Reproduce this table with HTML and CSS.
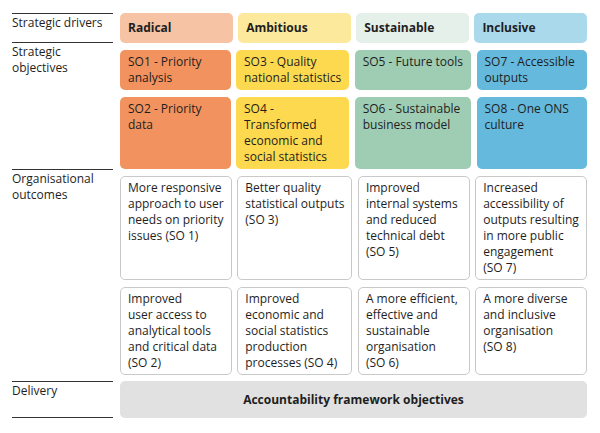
FILE: index.html
```html
<!DOCTYPE html>
<html lang="en">
<head>
<meta charset="utf-8">
<title>ONS strategy</title>
<link rel="stylesheet" href="styles.css">
</head>
<body>
<div class="chart">
  <section class="band band-drivers">
    <div class="label">Strategic drivers</div>
    <div class="cols">
      <div class="head radical-l">Radical</div>
      <div class="head ambitious-l">Ambitious</div>
      <div class="head sustainable-l">Sustainable</div>
      <div class="head inclusive-l">Inclusive</div>
    </div>
  </section>
  <section class="band band-objectives">
    <div class="label">Strategic<br>objectives</div>
    <div class="cols">
      <div class="box radical">SO1 - Priority<br>analysis</div>
      <div class="box ambitious">SO3 - Quality<br>national statistics</div>
      <div class="box sustainable">SO5 - Future tools</div>
      <div class="box inclusive">SO7 - Accessible<br>outputs</div>
      <div class="box radical">SO2 - Priority<br>data</div>
      <div class="box ambitious">SO4 -<br>Transformed<br>economic and<br>social statistics</div>
      <div class="box sustainable">SO6 - Sustainable<br>business model</div>
      <div class="box inclusive">SO8 - One ONS<br>culture</div>
    </div>
  </section>
  <section class="band band-outcomes">
    <div class="label">Organisational<br>outcomes</div>
    <div class="cols">
      <div class="card">More responsive<br>approach to user<br>needs on priority<br>issues (SO 1)</div>
      <div class="card">Better quality<br>statistical outputs<br>(SO 3)</div>
      <div class="card">Improved<br>internal systems<br>and reduced<br>technical debt<br>(SO 5)</div>
      <div class="card">Increased<br>accessibility of<br>outputs resulting<br>in more public<br>engagement<br>(SO 7)</div>
      <div class="card">Improved<br>user access to<br>analytical tools<br>and critical data<br>(SO 2)</div>
      <div class="card">Improved<br>economic and<br>social statistics<br>production<br>processes (SO 4)</div>
      <div class="card">A more efficient,<br>effective and<br>sustainable<br>organisation<br>(SO 6)</div>
      <div class="card">A more diverse<br>and inclusive<br>organisation<br>(SO 8)</div>
    </div>
  </section>
  <section class="band band-delivery">
    <div class="label label-last">Delivery</div>
    <div class="delivery">Accountability framework objectives</div>
  </section>
</div>
</body>
</html>
```
FILE: styles.css
```css
* { box-sizing: border-box; }
html, body { margin: 0; padding: 0; background: #fff; }
body {
  font-family: "Open Sans", "Noto Sans", sans-serif;
  font-size: 12px;
  line-height: 16px;
  color: #1e1e1e;
}
.chart {
  width: 600px;
  padding: 13px 13px 0 12px;
}
.band {
  display: flex;
  align-items: stretch;
}
.label {
  width: 101px;
  flex: none;
  margin-right: 7px;
  border-top: 1px solid #333;
  padding-top: 1px;
  white-space: nowrap;
}
.cols {
  flex: 1;
  display: grid;
  grid-template-columns: repeat(4, 1fr);
  column-gap: 5.5px;
  row-gap: 7px;
}
.band-objectives { margin-top: -1px; }
.band-objectives .cols { padding-top: 8px; }
.band-outcomes .cols { padding-top: 7px; }
.band-delivery { margin-top: 6px; }
.head {
  height: 30px;
  border-radius: 5px;
  padding: 0 8px;
  display: flex;
  align-items: center;
  font-weight: 700;
}
.box {
  border-radius: 5px;
  padding: 4px 8px;
  white-space: nowrap;
}
.card {
  border: 1px solid #c9c9c9;
  border-radius: 5px;
  padding: 3px 7px;
  white-space: nowrap;
}
.radical-l { background: #f6c3a5; }
.ambitious-l { background: #fde99b; }
.sustainable-l { background: #e6f0eb; }
.inclusive-l { background: #a9d9eb; }
.radical { background: #f2935f; }
.ambitious { background: #fdd94f; }
.sustainable { background: #9fcdb4; }
.inclusive { background: #65b9dc; }
.label-last { border-bottom: 1px solid #333; height: 37px; }
.delivery {
  flex: 1;
  height: 37px;
  border-radius: 5px;
  background: #e1e1e1;
  display: flex;
  align-items: center;
  justify-content: center;
  font-weight: 700;
}
```
